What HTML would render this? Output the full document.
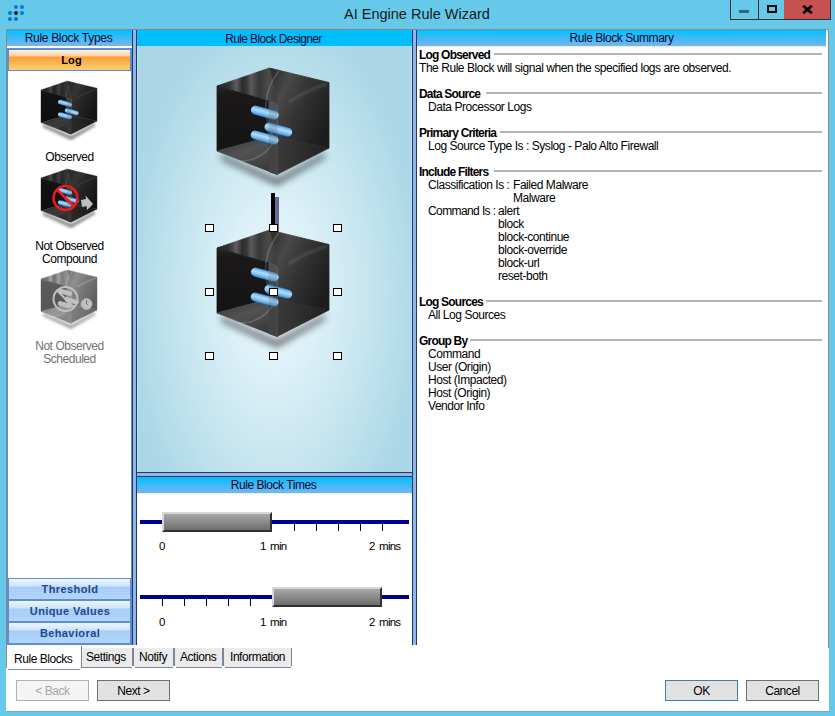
<!DOCTYPE html>
<html><head><meta charset="utf-8">
<style>
*{margin:0;padding:0;box-sizing:border-box}
html,body{width:835px;height:716px;overflow:hidden;background:#66c9e9;font-family:"Liberation Sans",sans-serif;font-size:11px;color:#000}
.a{position:absolute}
.t{position:absolute;white-space:nowrap;line-height:13px;font-size:12px;letter-spacing:-0.45px}
.c{}
.h{letter-spacing:-0.8px}
.s{font-size:11px}
</style></head><body>
<svg width="0" height="0" style="position:absolute">
<defs>
<linearGradient id="gTop" x1="0" y1="0" x2="1" y2="0">
<stop offset="0" stop-color="#252323"/><stop offset="0.2" stop-color="#333"/><stop offset="0.32" stop-color="#5e5e5e"/><stop offset="0.42" stop-color="#2c2b2b"/><stop offset="0.5" stop-color="#3a3a3a"/><stop offset="0.56" stop-color="#5a5a5a"/><stop offset="0.7" stop-color="#383838"/><stop offset="0.85" stop-color="#4a4a4a"/><stop offset="1" stop-color="#3a3a3a"/></linearGradient>
<linearGradient id="gLeft" x1="0" y1="0" x2="0" y2="1">
<stop offset="0" stop-color="#262424"/><stop offset="0.15" stop-color="#1a1818"/><stop offset="1" stop-color="#151414"/></linearGradient>
<linearGradient id="gFloor" x1="0" y1="0" x2="0.6" y2="1">
<stop offset="0" stop-color="#333"/><stop offset="0.5" stop-color="#525252"/><stop offset="1" stop-color="#3a3a3a"/></linearGradient>
<linearGradient id="gRight" x1="0" y1="0.1" x2="1" y2="0.7">
<stop offset="0" stop-color="#2e2c2c"/><stop offset="0.25" stop-color="#4a4848"/><stop offset="0.55" stop-color="#333"/><stop offset="1" stop-color="#1c1c1c"/></linearGradient>
<linearGradient id="gStripB" x1="0" y1="0" x2="0" y2="1">
<stop offset="0" stop-color="#4a4a4a"/><stop offset="0.5" stop-color="#3e3e3e"/><stop offset="1" stop-color="#444"/></linearGradient>
<filter id="blur1" x="-50%" y="-50%" width="200%" height="200%"><feGaussianBlur stdDeviation="1.2"/></filter>
<linearGradient id="gRFloor" x1="0" y1="0" x2="1" y2="0">
<stop offset="0" stop-color="#3a3a3a"/><stop offset="1" stop-color="#202020"/></linearGradient>
<linearGradient id="gStrip" x1="0" y1="0" x2="0" y2="1">
<stop offset="0" stop-color="#6a6a6a"/><stop offset="0.5" stop-color="#4a4a4a"/><stop offset="1" stop-color="#444"/></linearGradient>
<linearGradient id="gPill" x1="0" y1="0" x2="0" y2="1">
<stop offset="0" stop-color="#3288d8"/><stop offset="0.18" stop-color="#7cbcee"/><stop offset="0.42" stop-color="#b4dcf8"/><stop offset="0.72" stop-color="#7cbcee"/><stop offset="1" stop-color="#3088d6"/></linearGradient>
<filter id="blur5" x="-50%" y="-50%" width="200%" height="200%"><feGaussianBlur stdDeviation="3.5"/></filter>
<symbol id="cubeBody" viewBox="0 0 112 107" overflow="visible">
<polygon points="4,86 60,110 108,84 108,90 60,118 4,92" fill="#000" opacity="0.5" filter="url(#blur5)"/>
<polygon points="52.5,0 112,14.5 112,80 60,69.5 60.5,36" fill="url(#gRight)" stroke="url(#gRight)" stroke-width="0.8" stroke-linejoin="round"/>
<polygon points="0,18 52.5,0 60.5,36 51.7,33" fill="url(#gTop)" stroke="url(#gTop)" stroke-width="0.8" stroke-linejoin="round"/>
<polygon points="0,18 51.7,33 51.7,69 0,83" fill="url(#gLeft)" stroke="url(#gLeft)" stroke-width="0.8" stroke-linejoin="round"/>
<polygon points="0,83 51.7,69 60,69.5 60,106.5" fill="url(#gFloor)" stroke="url(#gFloor)" stroke-width="0.8" stroke-linejoin="round"/>
<polygon points="60,69.5 112,80 60,106.5" fill="url(#gRFloor)" stroke="url(#gRFloor)" stroke-width="0.8" stroke-linejoin="round"/>
<polygon points="51.7,33 60.5,36 60,106.5 51.7,104" fill="url(#gStripB)"/>
<path d="M60.3 37 L60 106" stroke="#8a8a8a" stroke-opacity="0.35" stroke-width="0.8"/>
<path d="M110 16 Q 90 22 72 34" stroke="#fff" stroke-opacity="0.1" stroke-width="3" fill="none" filter="url(#blur1)"/>
<path d="M62 3 C 46 22, 44 50, 58 72 C 50 86, 38 93, 22 93" stroke="#fff" stroke-opacity="0.16" stroke-width="1.6" fill="none"/>
</symbol>
<symbol id="pills" viewBox="0 0 112 107" overflow="visible">
<g transform="rotate(15 47.8 44.6)"><rect x="33.6" y="40.1" width="28.4" height="9" rx="4.5" fill="url(#gPill)"/></g>
<g transform="rotate(15 61.3 61.6)"><rect x="47.1" y="57.1" width="28.4" height="9" rx="4.5" fill="url(#gPill)"/></g>
<g transform="rotate(15 47.6 69.5)"><rect x="33.4" y="65" width="28.4" height="9" rx="4.5" fill="url(#gPill)"/></g>
<polygon points="51.7,33 60.5,36 60,106.5 51.7,104" fill="url(#gStrip)" opacity="0.22"/>
</symbol>
</defs></svg>
<!-- title bar -->
<svg class="a" style="left:0;top:0" width="30" height="25">
<g fill="#0a78c8"><circle cx="16" cy="7" r="2"/><circle cx="22" cy="7" r="2"/><circle cx="10" cy="13" r="2"/><circle cx="22" cy="13" r="2"/><circle cx="10" cy="19" r="2"/><circle cx="16" cy="19" r="2"/></g>
<circle cx="16" cy="13" r="2" fill="#0a1a40"/>
</svg>
<div class="t" style="left:344px;top:5px;font-size:14.5px;line-height:18px;color:#1a1a1a;letter-spacing:0">AI Engine Rule Wizard</div>
<div class="a" style="left:730px;top:0;width:29px;height:20px;border:1px solid #333;border-top:0"></div>
<div class="a" style="left:739px;top:10px;width:10px;height:3px;background:#2d6a80"></div>
<div class="a" style="left:758px;top:0;width:27px;height:20px;border:1px solid #333;border-top:0;border-left:0"></div>
<div class="a" style="left:767px;top:5px;width:10px;height:8px;border:2px solid #000"></div>
<div class="a" style="left:784px;top:0;width:47px;height:20px;background:#c75050;border:1px solid #333;border-top:0;border-left:0"></div>
<svg class="a" style="left:802px;top:5px" width="11" height="9"><path d="M1.2 0.8L9.8 8.2M9.8 0.8L1.2 8.2" stroke="#000" stroke-width="2.8"/></svg>

<!-- window body -->
<div class="a" style="left:6px;top:29px;width:823px;height:682px;background:#fff"></div>
<div class="a" style="left:6px;top:711px;width:823px;height:1px;background:#6caccb"></div>
<div class="a" style="left:6px;top:29px;width:823px;height:1px;background:#8a8a8a"></div>
<div class="a" style="left:6px;top:29px;width:1px;height:639px;background:#8a8a8a"></div>
<div class="a" style="left:828px;top:29px;width:1px;height:619px;background:#8a8a8a"></div>

<!-- splitters -->
<div class="a" style="left:132px;top:30px;width:5px;height:615px;background:#94b4e8;border-left:1px solid #1c3a6a;border-right:1px solid #1c3a6a"></div>
<div class="a" style="left:412px;top:30px;width:5px;height:615px;background:#94b4e8;border-left:1px solid #1c3a6a;border-right:1px solid #1c3a6a"></div>

<!-- LEFT PANEL -->
<div class="a" style="left:7px;top:30px;width:125px;height:16px;background:linear-gradient(#00bfff,#7ab4ee)"></div>
<div class="t c" style="left:7px;width:125px;text-align:center;top:32px;color:#0a0a30;letter-spacing:-0.3px;padding-right:2px">Rule Block Types</div>
<div class="a" style="left:7px;top:48px;width:125px;height:2px;background:#5b8fd0"></div>
<div class="a" style="left:7px;top:50px;width:2px;height:21px;background:#5b8fd0"></div>
<div class="a" style="left:130px;top:50px;width:2px;height:21px;background:#5b8fd0"></div>
<div class="a" style="left:9px;top:50px;width:121px;height:20px;background:linear-gradient(#fff0e0 0%,#fdd0a0 30%,#fba030 35%,#fcb050 60%,#fdd070 100%)"></div>
<div class="a" style="left:7px;top:70px;width:125px;height:1px;background:#5b8fd0"></div>
<div class="t c s" style="left:11px;width:121px;text-align:center;top:54px;font-weight:bold;letter-spacing:0.1px">Log</div>
<div class="a" style="left:7px;top:71px;width:1px;height:507px;background:#5b8fd0"></div>
<div class="a" style="left:131px;top:71px;width:1px;height:507px;background:#5b8fd0"></div>

<!-- bottom buttons -->
<div class="a" style="left:7px;top:578px;width:125px;height:67px;background:#5b8fd0"></div>
<div class="a" style="left:9px;top:579px;width:121px;height:20px;background:linear-gradient(#eef6ff 0%,#cfe3fb 35%,#a8cdf8 40%,#b4d4fa 100%)"></div>
<div class="a" style="left:9px;top:601px;width:121px;height:20px;background:linear-gradient(#eef6ff 0%,#cfe3fb 35%,#a8cdf8 40%,#b4d4fa 100%)"></div>
<div class="a" style="left:9px;top:623px;width:121px;height:20px;background:linear-gradient(#eef6ff 0%,#cfe3fb 35%,#a8cdf8 40%,#b4d4fa 100%)"></div>
<div class="t c s" style="left:9px;width:121px;text-align:center;top:583px;font-weight:bold;color:#1c4a92;letter-spacing:0.4px;padding-left:1px">Threshold</div>
<div class="t c s" style="left:9px;width:121px;text-align:center;top:605px;font-weight:bold;color:#1c4a92;letter-spacing:0.4px;padding-left:1px">Unique Values</div>
<div class="t c s" style="left:9px;width:121px;text-align:center;top:627px;font-weight:bold;color:#1c4a92;letter-spacing:0.4px;padding-left:1px">Behavioral</div>

<!-- CENTER PANEL -->
<div class="a" style="left:137px;top:30px;width:275px;height:16px;background:#00bfff"></div>
<div class="t c" style="left:137px;width:275px;text-align:center;top:33px;color:#0a0a30;letter-spacing:-0.65px;padding-right:2px">Rule Block Designer</div>
<div class="a" style="left:137px;top:46px;width:275px;height:426px;background:radial-gradient(ellipse 150px 285px at 137px 245px,#f2fafd 0%,#dcf0f7 30%,#c4e4ef 65%,#aad6e6 100%)"></div>
<div class="a" style="left:137px;top:46px;width:1px;height:426px;background:#bde6f4"></div>
<div class="a" style="left:411px;top:46px;width:1px;height:426px;background:#bde6f4"></div>
<div class="a" style="left:137px;top:472px;width:275px;height:5px;background:#94b4e8;border-top:1px solid #1c3a6a;border-bottom:1px solid #1c3a6a"></div>
<div class="a" style="left:137px;top:477px;width:275px;height:16px;background:linear-gradient(#00bfff,#7ab4ee)"></div>
<div class="t c" style="left:137px;width:275px;text-align:center;top:479px;color:#0a0a30;padding-right:2px">Rule Block Times</div>
<div class="a" style="left:137px;top:493px;width:275px;height:1px;background:#e6f0fb"></div>

<!-- designer cubes -->
<svg class="a" style="left:217px;top:68px;overflow:visible" width="112" height="107"><use href="#cubeBody"/><use href="#pills"/></svg>
<svg class="a" style="left:217px;top:230px;overflow:visible" width="112" height="107"><use href="#cubeBody"/><use href="#pills"/></svg>
<div class="a" style="left:275px;top:197px;width:4px;height:35px;background:#6a6a98"></div>
<div class="a" style="left:271px;top:193px;width:4px;height:35px;background:#000"></div>
<div class="a" style="left:205px;top:224px;width:9px;height:8px;background:#fff;border:1px solid #000"></div>
<div class="a" style="left:205px;top:288px;width:9px;height:8px;background:#fff;border:1px solid #000"></div>
<div class="a" style="left:205px;top:352px;width:9px;height:8px;background:#fff;border:1px solid #000"></div>
<div class="a" style="left:269px;top:224px;width:9px;height:8px;background:#fff;border:1px solid #000"></div>
<div class="a" style="left:269px;top:288px;width:9px;height:8px;background:#fff;border:1px solid #000"></div>
<div class="a" style="left:269px;top:352px;width:9px;height:8px;background:#fff;border:1px solid #000"></div>
<div class="a" style="left:333px;top:224px;width:9px;height:8px;background:#fff;border:1px solid #000"></div>
<div class="a" style="left:333px;top:288px;width:9px;height:8px;background:#fff;border:1px solid #000"></div>
<div class="a" style="left:333px;top:352px;width:9px;height:8px;background:#fff;border:1px solid #000"></div>
<!-- left icons -->
<svg class="a" style="left:41px;top:81px;overflow:visible" width="56" height="53.5" viewBox="0 0 112 107"><use href="#cubeBody" style="filter:brightness(0.72)"/><use href="#pills"/></svg>
<div class="t c" style="left:7px;width:125px;text-align:center;top:151px">Observed</div>
<svg class="a" style="left:41px;top:169px;overflow:visible" width="56" height="53.5" viewBox="0 0 112 107"><use href="#cubeBody" style="filter:brightness(0.72)"/><use href="#pills"/>
<circle cx="49" cy="58" r="24" fill="none" stroke="#ee1c1c" stroke-width="5"/><path d="M32 41 L66 75" stroke="#ee1c1c" stroke-width="5"/>
<path d="M80 62 L90 60 L89 53 L104 70 L92 82 L91 74 L82 76 Z" fill="#c0c0c0"/></svg>
<div class="t c" style="left:7px;width:125px;text-align:center;top:240px;line-height:13px">Not Observed<br>Compound</div>
<svg class="a" style="left:41px;top:270px;overflow:visible;filter:grayscale(1) brightness(2.2) contrast(0.5)" width="56" height="53.5" viewBox="0 0 112 107"><use href="#cubeBody"/><use href="#pills"/>
<circle cx="49" cy="58" r="24" fill="none" stroke="#777" stroke-width="4"/><path d="M32 41 L66 75" stroke="#777" stroke-width="4"/>
<circle cx="91" cy="68" r="11" fill="#ccc" stroke="#555" stroke-width="2"/><path d="M91 60 L91 68 L97 71" stroke="#333" stroke-width="2" fill="none"/></svg>
<div class="t c" style="left:7px;width:125px;text-align:center;top:340px;line-height:13px;color:#727272">Not Observed<br>Scheduled</div>
<!-- times -->
<div class="a" style="left:140px;top:520px;width:269px;height:4px;background:#000090"></div>
<div class="a" style="left:294px;top:524px;width:1px;height:7px;background:#000"></div>
<div class="a" style="left:316px;top:524px;width:1px;height:7px;background:#000"></div>
<div class="a" style="left:338px;top:524px;width:1px;height:7px;background:#000"></div>
<div class="a" style="left:360px;top:524px;width:1px;height:7px;background:#000"></div>
<div class="a" style="left:382px;top:524px;width:1px;height:7px;background:#000"></div>
<div class="a" style="left:162px;top:512px;width:110px;height:20px;background:linear-gradient(#a8a8a8,#6e6e6e);border-top:2px solid #d8d8d8;border-left:2px solid #d8d8d8;border-bottom:2px solid #303030;border-right:2px solid #303030"></div>
<div class="t" style="left:159px;top:540px;font-size:11.5px;letter-spacing:-0.75px;word-spacing:2px">0</div>
<div class="t" style="left:260px;top:540px;font-size:11.5px;letter-spacing:-0.75px;word-spacing:2px">1 min</div>
<div class="t" style="left:369px;top:540px;font-size:11.5px;letter-spacing:-0.75px;word-spacing:2px">2 mins</div>
<div class="a" style="left:140px;top:595px;width:269px;height:4px;background:#000090"></div>
<div class="a" style="left:162px;top:599px;width:1px;height:7px;background:#000"></div>
<div class="a" style="left:184px;top:599px;width:1px;height:7px;background:#000"></div>
<div class="a" style="left:206px;top:599px;width:1px;height:7px;background:#000"></div>
<div class="a" style="left:228px;top:599px;width:1px;height:7px;background:#000"></div>
<div class="a" style="left:250px;top:599px;width:1px;height:7px;background:#000"></div>
<div class="a" style="left:272px;top:587px;width:110px;height:20px;background:linear-gradient(#a8a8a8,#6e6e6e);border-top:2px solid #d8d8d8;border-left:2px solid #d8d8d8;border-bottom:2px solid #303030;border-right:2px solid #303030"></div>
<div class="t" style="left:159px;top:616px;font-size:11.5px;letter-spacing:-0.75px;word-spacing:2px">0</div>
<div class="t" style="left:260px;top:616px;font-size:11.5px;letter-spacing:-0.75px;word-spacing:2px">1 min</div>
<div class="t" style="left:369px;top:616px;font-size:11.5px;letter-spacing:-0.75px;word-spacing:2px">2 mins</div>
<!-- RIGHT PANEL -->
<div class="a" style="left:417px;top:30px;width:409px;height:16px;background:linear-gradient(#00bfff,#7ab4ee)"></div>
<div class="t c" style="left:417px;width:409px;text-align:center;top:32px;color:#0a0a30">Rule Block Summary</div>
<div class="a" style="left:417px;top:46px;width:409px;height:1px;background:#e6f0fb"></div>

<div class="t h" style="left:419px;top:49px;font-weight:bold">Log Observed</div>
<div class="a" style="left:494px;top:53px;width:328px;height:2px;background:#b4b4b4"></div>
<div class="t" style="left:419px;top:62px">The Rule Block will signal when the specified logs are observed.</div>
<div class="t h" style="left:419px;top:88px;font-weight:bold">Data Source</div>
<div class="a" style="left:486px;top:92px;width:336px;height:2px;background:#b4b4b4"></div>
<div class="t" style="left:428px;top:101px">Data Processor Logs</div>
<div class="t h" style="left:419px;top:127px;font-weight:bold">Primary Criteria</div>
<div class="a" style="left:500px;top:131px;width:322px;height:2px;background:#b4b4b4"></div>
<div class="t" style="left:428px;top:140px">Log Source Type Is : Syslog - Palo Alto Firewall</div>
<div class="t h" style="left:419px;top:166px;font-weight:bold">Include Filters</div>
<div class="a" style="left:494px;top:170px;width:328px;height:2px;background:#b4b4b4"></div>
<div class="t" style="left:428px;top:179px">Classification Is :</div>
<div class="t" style="left:513px;top:179px">Failed Malware</div>
<div class="t" style="left:513px;top:192px">Malware</div>
<div class="t" style="left:428px;top:205px;letter-spacing:-0.6px">Command Is :</div>
<div class="t" style="left:498px;top:205px">alert</div>
<div class="t" style="left:498px;top:218px">block</div>
<div class="t" style="left:498px;top:231px">block-continue</div>
<div class="t" style="left:498px;top:244px">block-override</div>
<div class="t" style="left:498px;top:257px">block-url</div>
<div class="t" style="left:498px;top:270px">reset-both</div>
<div class="t h" style="left:419px;top:296px;font-weight:bold">Log Sources</div>
<div class="a" style="left:486px;top:300px;width:336px;height:2px;background:#b4b4b4"></div>
<div class="t" style="left:428px;top:309px">All Log Sources</div>
<div class="t h" style="left:419px;top:335px;font-weight:bold">Group By</div>
<div class="a" style="left:470px;top:339px;width:352px;height:2px;background:#b4b4b4"></div>
<div class="t" style="left:428px;top:348px">Command</div>
<div class="t" style="left:428px;top:361px">User (Origin)</div>
<div class="t" style="left:428px;top:374px">Host (Impacted)</div>
<div class="t" style="left:428px;top:387px">Host (Origin)</div>
<div class="t" style="left:428px;top:400px">Vendor Info</div>
<!-- tabs -->
<div class="a" style="left:8px;top:669px;width:72px;height:1px;background:#8a8a98"></div>
<div class="t" style="left:14px;top:653px">Rule Blocks</div>
<div class="a" style="left:81px;top:646px;width:1px;height:22px;background:#80849a"></div>
<div class="a" style="left:82px;top:648px;width:50px;height:19px;background:#ebebeb"></div>
<div class="a" style="left:81px;top:667px;width:51px;height:1px;background:#80849a"></div>
<div class="t" style="left:86px;top:651px">Settings</div>
<div class="a" style="left:132px;top:648px;width:2px;height:18px;background:#80849a"></div>
<div class="a" style="left:134px;top:648px;width:39px;height:19px;background:#ebebeb"></div>
<div class="a" style="left:135px;top:667px;width:38px;height:1px;background:#80849a"></div>
<div class="t" style="left:139px;top:651px">Notify</div>
<div class="a" style="left:173px;top:648px;width:2px;height:18px;background:#80849a"></div>
<div class="a" style="left:175px;top:648px;width:47px;height:19px;background:#ebebeb"></div>
<div class="a" style="left:176px;top:667px;width:46px;height:1px;background:#80849a"></div>
<div class="t" style="left:180px;top:651px">Actions</div>
<div class="a" style="left:222px;top:648px;width:2px;height:18px;background:#80849a"></div>
<div class="a" style="left:224px;top:648px;width:67px;height:19px;background:#ebebeb"></div>
<div class="a" style="left:225px;top:667px;width:66px;height:1px;background:#80849a"></div>
<div class="t" style="left:230px;top:651px">Information</div>
<div class="a" style="left:291px;top:648px;width:1px;height:18px;background:#80849a"></div>
<!-- buttons -->
<div class="a" style="left:16px;top:680px;width:73px;height:21px;background:#f4f4f4;border:1px solid #adb2b5"></div>
<div class="t c" style="left:16px;width:73px;text-align:center;top:685px;color:#a6a6a6">&lt; Back</div>
<div class="a" style="left:97px;top:680px;width:73px;height:21px;background:#e1e1e1;border:1px solid #707070"></div>
<div class="t c" style="left:97px;width:73px;text-align:center;top:685px">Next &gt;</div>
<div class="a" style="left:665px;top:680px;width:73px;height:21px;background:#e1e1e1;border:1px solid #3c7fb1"></div>
<div class="t c" style="left:665px;width:73px;text-align:center;top:685px">OK</div>
<div class="a" style="left:746px;top:680px;width:73px;height:21px;background:#e1e1e1;border:1px solid #707070"></div>
<div class="t c" style="left:746px;width:73px;text-align:center;top:685px">Cancel</div>
<!-- tabs / bottom -->

</body></html>
